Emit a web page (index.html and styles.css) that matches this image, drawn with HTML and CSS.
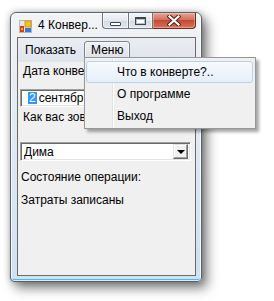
FILE: index.html
```html
<!DOCTYPE html>
<html lang="ru">
<head>
    <meta charset="UTF-8">
    <title>4 Конвертов</title>
    <link rel="stylesheet" href="styles.css">
</head>
<body>
    <div class="window">
        <div class="titlebar">
            <svg class="app-icon" width="13" height="13" viewBox="0 0 13 13">
                <rect x="0.5" y="0.5" width="12" height="12" fill="#e4e6ea" stroke="#b4b8bf"/>
                <rect x="6" y="1" width="6" height="6" fill="#f7c21a" stroke="#d58a0e" stroke-width="0.8"/>
                <rect x="1" y="6" width="4" height="6" fill="#e2331c"/>
                <rect x="2" y="8" width="2" height="2" fill="#f7c21a"/>
                <rect x="6" y="8" width="6" height="4" fill="#3a78d6"/>
            </svg>
            <span class="title">4 Конвер...</span>
            <div class="caption-buttons">
                <div class="cap-btn cap-min"><span class="glyph-min"></span></div>
                <div class="cap-btn cap-max"><span class="glyph-max"></span></div>
                <div class="cap-btn cap-close">
                    <svg width="14" height="11" viewBox="0 0 14 11">
                        <path d="M2.5 1.5 L11.5 9.5 M11.5 1.5 L2.5 9.5" stroke="#4b2119" stroke-width="4.2" stroke-linecap="square"/>
                        <path d="M2.5 1.5 L11.5 9.5 M11.5 1.5 L2.5 9.5" stroke="#ffffff" stroke-width="2.2" stroke-linecap="square"/>
                    </svg>
                </div>
            </div>
        </div>

        <div class="client">
            <div class="menubar">
                <span class="menu-item">Показать</span>
                <span class="menu-item open">Меню</span>
            </div>

            <div class="form">
                <div class="label label-date">Дата конве</div>
                <div class="date-box">
                    <span class="date-day">2</span><span class="date-rest">сентябр</span>
                </div>
                <div class="label label-name">Как вас зов</div>
                <div class="combo">
                    <span class="combo-text">Дима</span>
                    <span class="combo-btn"><span class="combo-arrow"></span></span>
                </div>
                <div class="label label-status">Состояние операции:</div>
                <div class="label label-result">Затраты записаны</div>
            </div>
        </div>

        <div class="dropdown">
            <div class="drop-item active">Что в конверте?..</div>
            <div class="drop-item">О программе</div>
            <div class="drop-item">Выход</div>
        </div>
    </div>
</body>
</html>
```

FILE: styles.css
```css
* {
    margin: 0;
    padding: 0;
    box-sizing: border-box;
}

body {
    font-family: "Liberation Sans", Arial, sans-serif;
    font-size: 12px;
    color: #000;
    background: #fff;
    width: 274px;
    height: 301px;
    overflow: hidden;
    padding: 12px 0 0 10px;
}

.window {
    position: relative;
    width: 192px;
    height: 270px;
    display: flex;
    flex-direction: column;
    padding: 0 5px 5px 6px;
    border: 1px solid #56626f;
    border-radius: 6px 6px 4px 4px;
    background: linear-gradient(#f2f3f5, #e6ebf1 30%, #d0e1f2);
    box-shadow: inset 0 0 0 1px rgba(255, 255, 255, 0.75),
                inset 0 -2px 0 #4cbbea,
                0 0 6px rgba(0, 0, 0, 0.25),
                5px 6px 12px rgba(0, 0, 0, 0.5);
}

.titlebar {
    height: 24px;
    display: flex;
    align-items: flex-start;
}

.app-icon {
    margin: 7px 0 0 2px;
    flex-shrink: 0;
}

.title {
    margin: 5px 0 0 6px;
    line-height: 14px;
    white-space: nowrap;
}

.caption-buttons {
    margin-left: auto;
    display: flex;
    height: 16px;
}

.cap-btn {
    height: 16px;
    display: flex;
    align-items: center;
    justify-content: center;
    border: 1px solid #6c7682;
    border-top: none;
    background: linear-gradient(#f4f6f9, #e3e8ee 50%, #d2dae4 51%, #dfe6ee);
    box-shadow: inset 0 0 0 1px rgba(255, 255, 255, 0.6);
}

.cap-min {
    width: 26px;
    border-radius: 0 0 0 4px;
    border-right: none;
}

.cap-max {
    width: 25px;
}

.cap-close {
    width: 43px;
    border-left: none;
    border-color: #6b2a21;
    border-radius: 0 0 4px 0;
    background: linear-gradient(#e6a594, #d3705b 45%, #c24a33 50%, #d9735a);
    box-shadow: inset 0 0 0 1px rgba(255, 210, 200, 0.45);
}

.glyph-min {
    width: 11px;
    height: 4px;
    margin-top: 6px;
    border: 1px solid #3c4652;
    background: #fff;
    border-radius: 1px;
}

.glyph-max {
    width: 11px;
    height: 8px;
    border: 1px solid #3c4652;
    border-top-width: 2px;
    background: #fff;
    box-shadow: inset 0 0 0 1px #b8c0ca;
}

.client {
    flex: 1;
    display: flex;
    flex-direction: column;
    border: 1px solid #6a6a6a;
    background: #f0f0f0;
}

.menubar {
    height: 24px;
    display: flex;
    align-items: center;
    gap: 1px;
    background: linear-gradient(#ebedf3, #dfe3ec);
}

.menu-item {
    height: 19px;
    line-height: 17px;
    padding: 0 6px;
    border: 1px solid transparent;
    border-radius: 3px;
    white-space: nowrap;
}

.menu-item.open {
    border-color: #7a828e;
    background: linear-gradient(#eef0f4, #dde1e8);
    box-shadow: inset 0 0 0 1px rgba(255, 255, 255, 0.6);
}

.form {
    display: flex;
    flex-direction: column;
    padding-left: 2px;
}

.label {
    line-height: 14px;
    white-space: nowrap;
}

.label-date {
    margin-top: 2px;
    padding-left: 3px;
}

.date-box {
    margin-top: 11px;
    width: 170px;
    height: 18px;
    display: flex;
    align-items: center;
    background: #fff;
    border: 1px solid;
    border-color: #a0a0a0 #fff #fff #a0a0a0;
    box-shadow: inset 1px 1px 0 #696969, inset -1px -1px 0 #e3e3e3;
    padding-left: 7px;
    white-space: nowrap;
    overflow: hidden;
}

.date-day {
    background: #3399ff;
    color: #fff;
    line-height: 12px;
    padding: 0 1px;
}

.date-rest {
    margin-left: 2px;
}

.label-name {
    margin-top: 3px;
    padding-left: 3px;
}

.combo {
    margin-top: 18px;
    width: 171px;
    height: 19px;
    display: flex;
    align-items: center;
    background: #fff;
    border: 1px solid;
    border-color: #a0a0a0 #fff #fff #a0a0a0;
    box-shadow: inset 1px 1px 0 #696969, inset -1px -1px 0 #e3e3e3;
    padding: 2px;
}

.combo-text {
    flex: 1;
    padding-left: 1px;
}

.combo-btn {
    width: 15px;
    height: 15px;
    display: flex;
    align-items: center;
    justify-content: center;
    background: #f0f0f0;
    border: 1px solid;
    border-color: #e3e3e3 #696969 #696969 #e3e3e3;
    box-shadow: inset -1px -1px 0 #a0a0a0, inset 1px 1px 0 #fff;
}

.combo-arrow {
    width: 0;
    height: 0;
    border-left: 4px solid transparent;
    border-right: 4px solid transparent;
    border-top: 4px solid #000;
    margin-top: 1px;
}

.label-status {
    margin-top: 9px;
    padding-left: 1px;
}

.label-result {
    margin-top: 9px;
    padding-left: 1px;
}

.dropdown {
    position: absolute;
    left: 73px;
    top: 44px;
    width: 172px;
    padding: 3px 2px 1px 1px;
    border: 1px solid #979797;
    background: linear-gradient(to right, transparent 27px, #e2e3e3 27px, #e2e3e3 28px, #fff 28px, #fff 29px, transparent 29px), #f0f0f0;
    box-shadow: 3px 3px 3px rgba(0, 0, 0, 0.35);
}

.drop-item {
    height: 22px;
    line-height: 21px;
    padding-left: 30px;
    border: 1px solid transparent;
    border-radius: 3px;
    white-space: nowrap;
}

.drop-item.active {
    border-color: #b9d2ec;
    background: linear-gradient(#f7fafd, #e6eef8);
}
```
